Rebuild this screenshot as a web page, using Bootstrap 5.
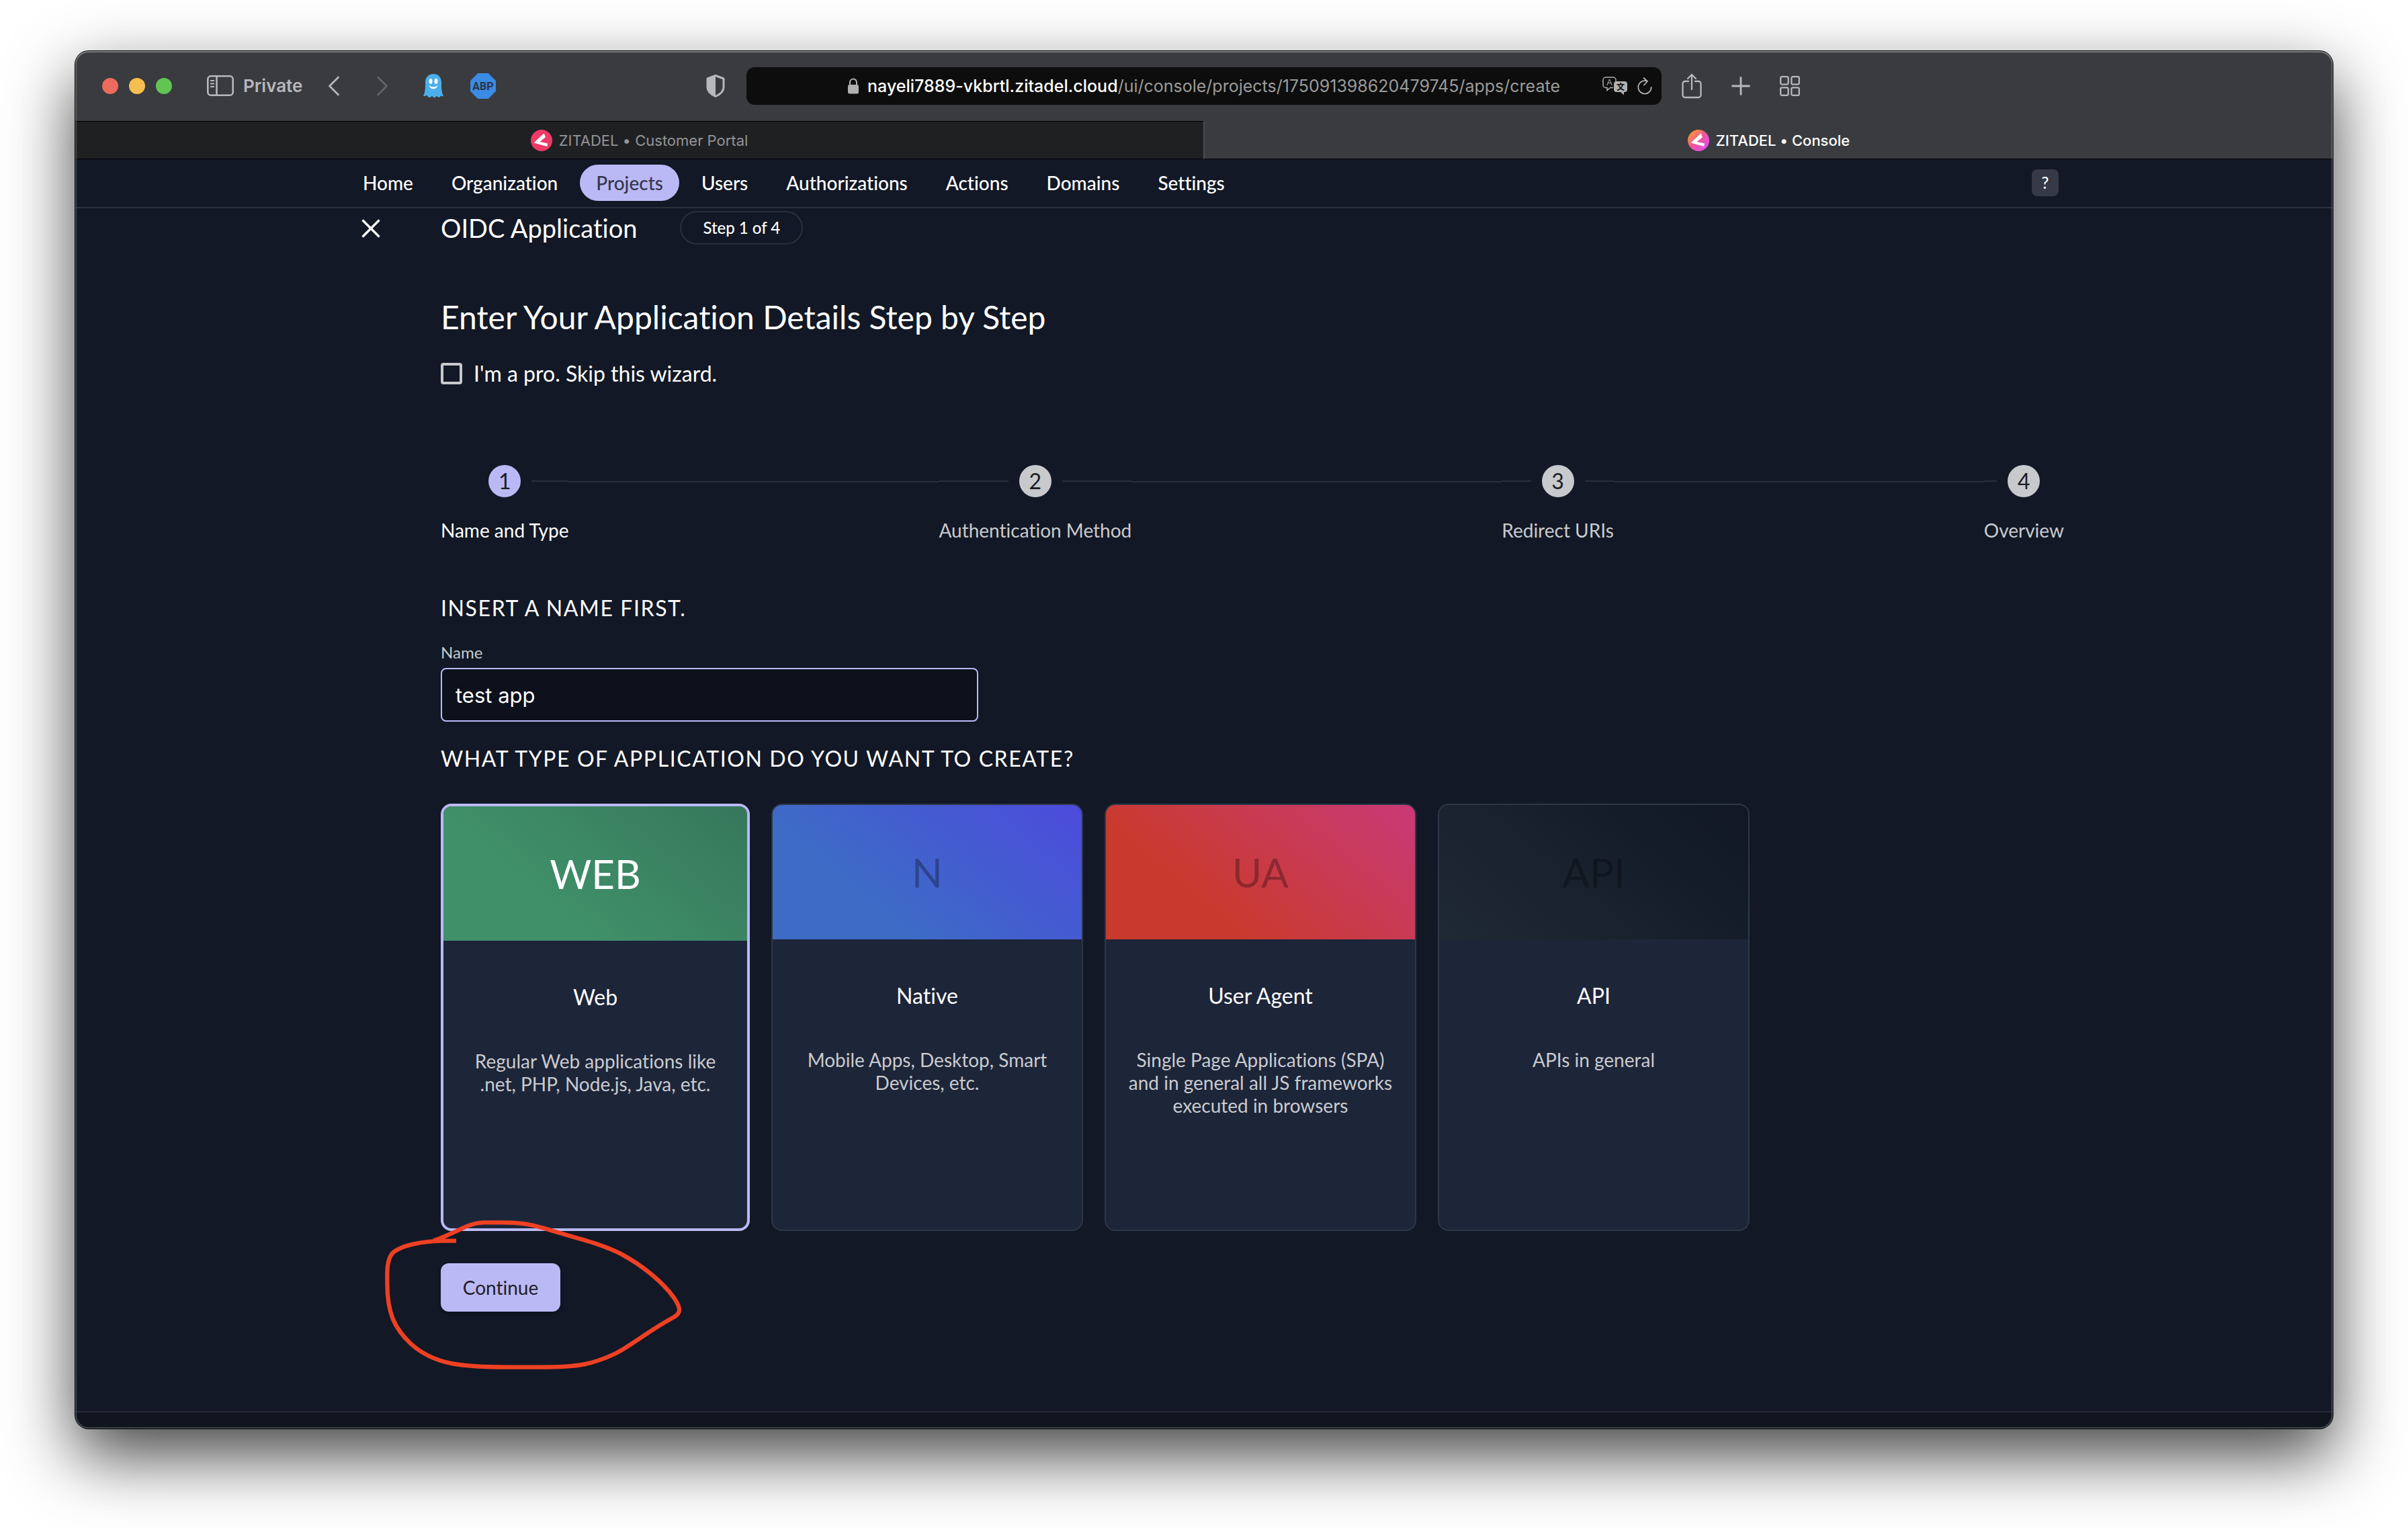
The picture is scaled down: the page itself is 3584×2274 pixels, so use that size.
<!DOCTYPE html>
<html lang="en">
<head>
<meta charset="utf-8">
<meta name="viewport" content="width=device-width, initial-scale=1">
<title>ZITADEL • Console</title>
<link href="https://cdn.jsdelivr.net/npm/bootstrap@5.3.0/dist/css/bootstrap.min.css" rel="stylesheet">
<style>
  :root { --ink:#121825; --line:#2b2f3d; --accent:#bbb9f5; --muted:#c9cbcf; --chrome:#3a3b3e; --glyph:#b7b8bc; }
  body { background:#fff; color:#fff; font-family:Lato, sans-serif; font-size:28px; line-height:34px; font-variant-ligatures:none; }
  h1,h2,h3,p { margin:0; font-weight:400; }
  button { font-family:inherit; font-variant-ligatures:none; }
  .desk { min-height:100vh; padding:76px 112px 148px; }
  .win { position:relative; border-radius:20px; background:var(--ink); overflow:hidden; }
  .win-shadow { border-radius:20px; box-shadow:0 0 0 1px #000, 0 40px 100px rgba(0,0,0,.74); }
  .win::after { content:""; position:absolute; inset:0; border-radius:20px; pointer-events:none;
    box-shadow:inset 0 0 0 2px rgba(255,255,255,.2), inset 0 2px 0 rgba(255,255,255,.2); }

  /* browser chrome */
  .chrome { background:var(--chrome); font-family:Inter, sans-serif; color:var(--glyph); }
  .toolbar { display:grid; grid-template-columns:1fr minmax(0,1362px) 1fr; height:104px; align-items:center; }
  .plain { background:none; border:0; padding:0; color:inherit; display:flex; }
  .light { width:24px; height:24px; border-radius:50%; border:0; padding:0; }
  .side-label { font-size:26px; font-weight:600; line-height:32px; }
  .address { display:grid; grid-template-columns:1fr auto 1fr; align-items:center; height:56px; border-radius:12px; background:#0d0d0d; font-size:25px; line-height:32px; color:#9b9b9b; white-space:nowrap; }
  .address strong { font-weight:500; color:#fff; }
  .tab { flex:1 1 0; height:57px; display:flex; align-items:center; justify-content:center; gap:10px; font-size:22px; line-height:28px; color:#939496; background:#1f2022; border-top:1px solid #000; border-bottom:1px solid #000; text-decoration:none; }
  .tab.current { background:var(--chrome); color:#fff; font-weight:500; border-top-color:var(--chrome); border-left:2px solid #4c4d50; }

  /* console */
  .wrap { width:100%; max-width:2560px; margin:0 auto; }
  .topnav { border-bottom:2px solid var(--line); }
  .topnav .wrap { height:71px; padding:8px 8px 0 4px; }
  .topnav .nav { gap:9px; }
  .topnav .nav-link { color:#fff; padding:10px 24px; border-radius:27px; font-size:28px; line-height:34px; font-weight:500; }
  .topnav .nav-link.active { background:var(--accent); color:#35374d; }
  .help { width:40px; height:40px; border:0; border-radius:8px; background:#363946; color:#fff; font-size:24px; font-weight:500; line-height:28px; padding:0; margin-top:7px; }
  .head { height:58px; }
  .close-col { width:144px; padding-left:24px; }
  .title { font-size:38px; line-height:46px; }
  .step-pill { border:2px solid var(--line); border-radius:25px; height:50px; padding:0 32px; font-size:24px; line-height:46px; font-weight:500; }
  .main-col { padding-left:144px; }
  .headline { font-size:48px; line-height:56px; margin-top:76px; }
  .pro { margin-top:36px; height:40px; gap:17px; font-size:32px; }
  .pro .form-check-input { width:32px; height:32px; margin:0; border:4px solid #c7c9cc; border-radius:4px; background-color:transparent; }
  .stepper { margin-top:116px; }
  .stepper .half, .stepper .link { flex:1 1 0; height:2px; background:var(--line); }
  .stepper .link { margin-top:24px; }
  .stepper .none { background:none; }
  .dot { width:48px; height:48px; margin:0 16px; border-radius:50%; background:#c7c9cc; color:#1c1d22; display:flex; align-items:center; justify-content:center; font-size:32px; }
  .now .dot { background:var(--accent); }
  .stepper .cap { margin-top:32px; color:var(--muted); white-space:nowrap; }
  .now .cap { color:#fff; }
  .section-h { font-size:32px; line-height:40px; letter-spacing:.05em; text-transform:uppercase; }
  .name-label { font-size:24px; line-height:28px; color:var(--muted); margin:32px 0 9px; display:block; }
  .name-box { width:800px; height:80px; border:2px solid var(--accent); border-radius:8px; background:#0d111b; color:#fff; font-family:Inter, sans-serif; font-size:31px; padding:0 20px; }
  .name-box:focus { background:#0d111b; color:#fff; border-color:var(--accent); box-shadow:none; }
  .types { gap:32px; margin-top:47px; }
  .type { width:464px; height:636px; border:2px solid #2d3748; border-radius:16px; background:#1d2539; overflow:hidden; text-align:center; cursor:pointer; }
  .btn-check:checked + .type { width:460px; border:4px solid var(--accent); }
  .type .banner { height:200px; display:flex; align-items:center; justify-content:center; font-size:60px; line-height:72px; color:rgba(0,0,0,.3); }
  .btn-check:checked + .type .banner { color:#fff; }
  .web { background:linear-gradient(40deg,#40916a 30%,#36775b); }
  .native { background:linear-gradient(40deg,#3d6bc6 30%,#4c4bdc); }
  .agent { background:linear-gradient(40deg,#c93a2e 30%,#c93a78); }
  .api { background:linear-gradient(40deg,#1f2933,#111725); }
  .type .t-name { font-size:32px; line-height:40px; margin-top:64px; }
  .type .t-desc { color:var(--muted); margin-top:58px; padding:0 32px; }
  .go { margin-top:48px; position:relative; width:178px; }
  .go .btn { width:178px; height:72px; border-radius:12px; border:0; background:var(--accent); color:#1f2027; font-size:28px; line-height:34px; padding:0; box-shadow:0 3px 5px rgba(0,0,0,.3); }
  .scribble { position:absolute; left:-116px; top:-100px; pointer-events:none; }
  .foot { height:26px; background:#11151f; border-top:2px solid #272b35; }
</style>
<script src="https://cdn.jsdelivr.net/npm/bootstrap@5.3.0/dist/js/bootstrap.bundle.min.js"></script>
</head>
<body>
<div class="desk d-flex">
 <div class="win-shadow d-flex flex-grow-1">
 <div class="win d-flex flex-column flex-grow-1">

  <header class="chrome">
    <div class="toolbar">
      <div class="d-flex align-items-center" style="padding-left:40px">
        <div class="d-flex gap-3">
          <button class="light" style="background:#ec6a5e" aria-label="Close window"></button>
          <button class="light" style="background:#f4bf4f" aria-label="Minimize"></button>
          <button class="light" style="background:#61c554" aria-label="Zoom"></button>
        </div>
        <button class="plain align-items-center" style="margin-left:52px;gap:14px">
          <svg width="40" height="32" viewBox="0 0 40 32" fill="none" stroke="currentColor" stroke-width="2.6"><rect x="1.3" y="1.3" width="37.4" height="28.4" rx="4.5"/><path d="M14.5 1.5v28"/><path d="M5 8h6M5 12.5h6M5 17h6" stroke-width="1.8"/></svg>
          <span class="side-label">Private</span>
        </button>
        <button class="plain" style="margin-left:38px" aria-label="Back"><svg width="18" height="30" viewBox="0 0 18 30" fill="none" stroke="currentColor" stroke-width="2.8" stroke-linecap="round" stroke-linejoin="round"><path d="M15.500 2 2.500 15l13 13"/></svg></button>
        <button class="plain" style="margin-left:54px;color:#626366" aria-label="Forward"><svg width="18" height="30" viewBox="0 0 18 30" fill="none" stroke="currentColor" stroke-width="2.800" stroke-linecap="round" stroke-linejoin="round"><path d="m2.500 2 13 13-13 13"/></svg></button>
        <button class="plain" style="margin-left:52px" aria-label="Ghostery"><svg width="30" height="36" viewBox="0 0 30 36"><path d="M15 0C7.500 0 3 5.500 3 12.500 3 21 3 27 0 33c2.500.5 4-.5 5-1.500 1.500 2.500 3 3.500 5 3.500 1.500 0 2-2 3-2 1.500 0 1.500 2.500 3.500 2.500 2 0 2-2.500 3.500-2.500 1 0 1.500 2 3 2 1 0 2-1 3-2.500 1 .5 2.500 1 4 .5-3-6-3-12-3-20.500C27 5.500 22.500 0 15 0z" fill="#4cafec"/><ellipse cx="11" cy="11" rx="2.500" ry="4" fill="#fff"/><ellipse cx="19" cy="11" rx="2.500" ry="4" fill="#fff"/><path d="M8.500 17c3 3.200 10 3.200 13 0-1.500 7-11.500 7-13 0z" fill="#fff"/></svg></button>
        <button class="plain" style="margin-left:40px" aria-label="AdBlock Plus"><svg width="38" height="38" viewBox="0 0 38 38"><path d="M11.200 0h15.600L38 11.200v15.600L26.800 38H11.200L0 26.800V11.200z" fill="#3a8be3"/><text x="19" y="24.500" font-family="Roboto, sans-serif" font-weight="700" font-size="16" text-anchor="middle" fill="#2b3440">ABP</text></svg></button>
        <button class="plain ms-auto" style="margin-right:32px" aria-label="Privacy report"><svg width="28" height="34" viewBox="0 0 28 34"><path d="M14 1.500 26 6v13c0 6-5.500 10.500-12 13.500C7.500 29.500 2 25 2 19V6z" fill="none" stroke="currentColor" stroke-width="3" stroke-linejoin="round"/><path d="M14 1.500V32C7.500 29.500 2 25 2 19V6z" fill="currentColor"/></svg></button>
      </div>
      <div class="address">
        <span></span>
        <div class="d-flex align-items-center" style="gap:13px">
          <svg width="16" height="24" viewBox="0 0 16 24"><rect y="10" width="16" height="13.500" rx="2.500" fill="#b0b0b0"/><path d="M3 11V6.500a5 5 0 0 1 10 0V11" fill="none" stroke="#b0b0b0" stroke-width="2"/></svg>
          <div><strong>nayeli7889-vkbrtl.zitadel.cloud</strong>/ui/console/projects/175091398620479745/apps/create</div>
        </div>
        <div class="d-flex align-items-center justify-content-end" style="gap:14px;padding-right:14px;color:#b0b0b0">
          <button class="plain" aria-label="Translate"><svg width="38" height="28" viewBox="0 0 38 28"><path d="M16 16.500h-4.500L7 20.500v-4H5a4 4 0 0 1-4-4V5a4 4 0 0 1 4-4h11a4 4 0 0 1 4 4v2" fill="none" stroke="currentColor" stroke-width="1.500"/><text x="10.500" y="13" font-family="Liberation Sans, sans-serif" font-size="12.500" text-anchor="middle" fill="currentColor">A</text><path d="M21 7h12a4 4 0 0 1 4 4v8a4 4 0 0 1-4 4h-1v4.500L27 23h-6a4 4 0 0 1-4-4v-8a4 4 0 0 1 4-4z" fill="currentColor"/><text x="27" y="19.500" font-family="Noto Sans CJK SC, sans-serif" font-weight="700" font-size="12" text-anchor="middle" fill="#0d0d0d">文</text></svg></button>
          <button class="plain" aria-label="Reload"><svg width="22" height="26" viewBox="0 0 22 26" fill="none" stroke="currentColor" stroke-width="1.800" stroke-linecap="round" stroke-linejoin="round"><path d="M15 6A9.700 9.700 0 1 0 20.700 15M9.500 1 15 6l-5 5.500"/></svg></button>
        </div>
      </div>
      <div class="d-flex align-items-center" style="padding-left:30px;gap:44px">
        <button class="plain" aria-label="Share"><svg width="30" height="38" viewBox="0 0 30 38" fill="none" stroke="currentColor" stroke-width="2.300" stroke-linecap="round" stroke-linejoin="round"><path d="M10 12H5a3.500 3.500 0 0 0-3.500 3.500v17A3.500 3.500 0 0 0 5 36h20a3.500 3.500 0 0 0 3.500-3.500v-17A3.500 3.500 0 0 0 25 12h-5M15 24V2M9 8l6-6 6 6"/></svg></button>
        <button class="plain" aria-label="New tab"><svg width="28" height="28" viewBox="0 0 28 28" stroke="currentColor" stroke-width="2.800" stroke-linecap="round"><path d="M14 1.500v25M1.500 14h25"/></svg></button>
        <button class="plain" aria-label="Tab overview"><svg width="30" height="30" viewBox="0 0 30 30" fill="none" stroke="currentColor" stroke-width="2.300"><rect x="1.200" y="1.200" width="11.400" height="11.400" rx="2"/><rect x="17.400" y="1.200" width="11.400" height="11.400" rx="2"/><rect x="1.200" y="17.400" width="11.400" height="11.400" rx="2"/><rect x="17.400" y="17.400" width="11.400" height="11.400" rx="2"/></svg></button>
      </div>
    </div>
    <nav class="d-flex" aria-label="Browser tabs">
      <a class="tab" href="#"><svg width="32" height="32" viewBox="0 0 32 32"><circle cx="16" cy="16" r="16" fill="#ee3a68"/><path d="M19.500 5.500 22 11l-8.500 7L25 20.500l-.8 4.500L4.500 19.500z" fill="#fff"/></svg>ZITADEL • Customer Portal</a>
      <a class="tab current" href="#"><svg width="32" height="32" viewBox="0 0 32 32"><defs><linearGradient id="zg" x1=".1" y1=".1" x2=".85" y2=".9"><stop offset="0" stop-color="#f79a2e"/><stop offset=".5" stop-color="#f0559a"/><stop offset="1" stop-color="#e04df0"/></linearGradient></defs><circle cx="16" cy="16" r="16" fill="url(#zg)"/><path d="M19.500 5.500 22 11l-8.500 7L25 20.500l-.8 4.500L4.500 19.500z" fill="#fff"/></svg>ZITADEL • Console</a>
    </nav>
  </header>

  <nav class="topnav" aria-label="Console">
    <div class="wrap d-flex align-items-start justify-content-between">
      <div class="nav">
        <a class="nav-link" href="#">Home</a>
        <a class="nav-link" href="#">Organization</a>
        <a class="nav-link active" href="#" aria-current="page">Projects</a>
        <a class="nav-link" href="#">Users</a>
        <a class="nav-link" href="#">Authorizations</a>
        <a class="nav-link" href="#">Actions</a>
        <a class="nav-link" href="#">Domains</a>
        <a class="nav-link" href="#">Settings</a>
      </div>
      <button class="help" aria-label="Help">?</button>
    </div>
  </nav>

  <main class="wrap">
    <div class="head d-flex align-items-center">
      <div class="close-col"><button class="plain" aria-label="Close"><svg width="32" height="32" viewBox="0 0 32 32" stroke="#fff" stroke-width="3.400"><path d="m3.500 4.500 25 25M28.500 4.500l-25 25"/></svg></button></div>
      <h1 class="title">OIDC Application</h1>
      <span class="step-pill" style="margin-left:64px">Step 1 of 4</span>
    </div>

    <div class="main-col">
      <h2 class="headline">Enter Your Application Details Step by Step</h2>
      <div class="pro d-flex align-items-center">
        <input class="form-check-input" type="checkbox" id="pro"><label for="pro">I'm a pro. Skip this wizard.</label>
      </div>

      <div class="stepper d-flex align-items-start">
        <div class="now"><div class="d-flex align-items-center"><i class="half none"></i><span class="dot">1</span><i class="half"></i></div><div class="cap">Name and Type</div></div>
        <i class="link"></i>
        <div><div class="d-flex align-items-center"><i class="half"></i><span class="dot">2</span><i class="half"></i></div><div class="cap">Authentication Method</div></div>
        <i class="link"></i>
        <div><div class="d-flex align-items-center"><i class="half"></i><span class="dot">3</span><i class="half"></i></div><div class="cap">Redirect URIs</div></div>
        <i class="link"></i>
        <div><div class="d-flex align-items-center"><i class="half"></i><span class="dot">4</span><i class="half none"></i></div><div class="cap">Overview</div></div>
      </div>

      <form>
        <h3 class="section-h" style="margin-top:79px">Insert a name first.</h3>
        <label class="name-label" for="appname">Name</label>
        <input class="form-control name-box" id="appname" type="text" value="test app">

        <h3 class="section-h" style="margin-top:35px">What type of application do you want to create?</h3>
        <div class="types d-flex flex-wrap">
          <input class="btn-check" type="radio" name="kind" id="k-web" checked>
          <label class="type" for="k-web"><div class="banner web">WEB</div><div class="t-name">Web</div><p class="t-desc">Regular Web applications like .net, PHP, Node.js, Java, etc.</p></label>
          <input class="btn-check" type="radio" name="kind" id="k-native">
          <label class="type" for="k-native"><div class="banner native">N</div><div class="t-name">Native</div><p class="t-desc">Mobile Apps, Desktop, Smart Devices, etc.</p></label>
          <input class="btn-check" type="radio" name="kind" id="k-ua">
          <label class="type" for="k-ua"><div class="banner agent">UA</div><div class="t-name">User Agent</div><p class="t-desc">Single Page Applications (SPA) and in general all JS frameworks executed in browsers</p></label>
          <input class="btn-check" type="radio" name="kind" id="k-api">
          <label class="type" for="k-api"><div class="banner api">API</div><div class="t-name">API</div><p class="t-desc">APIs in general</p></label>
        </div>

        <div class="go">
          <button class="btn" type="button">Continue</button>
          <svg class="scribble" width="520" height="300" viewBox="0 0 1560 900" fill="none" stroke="#ee4023" stroke-width="19"><path d="M417 200H355C260 202 180 220 140 248C118 265 109 300 109 345V390C109 520 140 590 215 660C320 755 450 764 650 764H800C950 764 1020 755 1130 702C1210 660 1270 605 1390 540C1422 520 1420 500 1390 455C1340 385 1250 310 1150 257C1080 220 1000 200 860 159C760 128 720 118 620 118H540C510 118 490 124 460 137C420 155 350 190 316 199"/></svg>
        </div>
      </form>
    </div>
  </main>

  <footer class="foot mt-auto"></footer>
 </div>
 </div>
</div>
</body>
</html>
